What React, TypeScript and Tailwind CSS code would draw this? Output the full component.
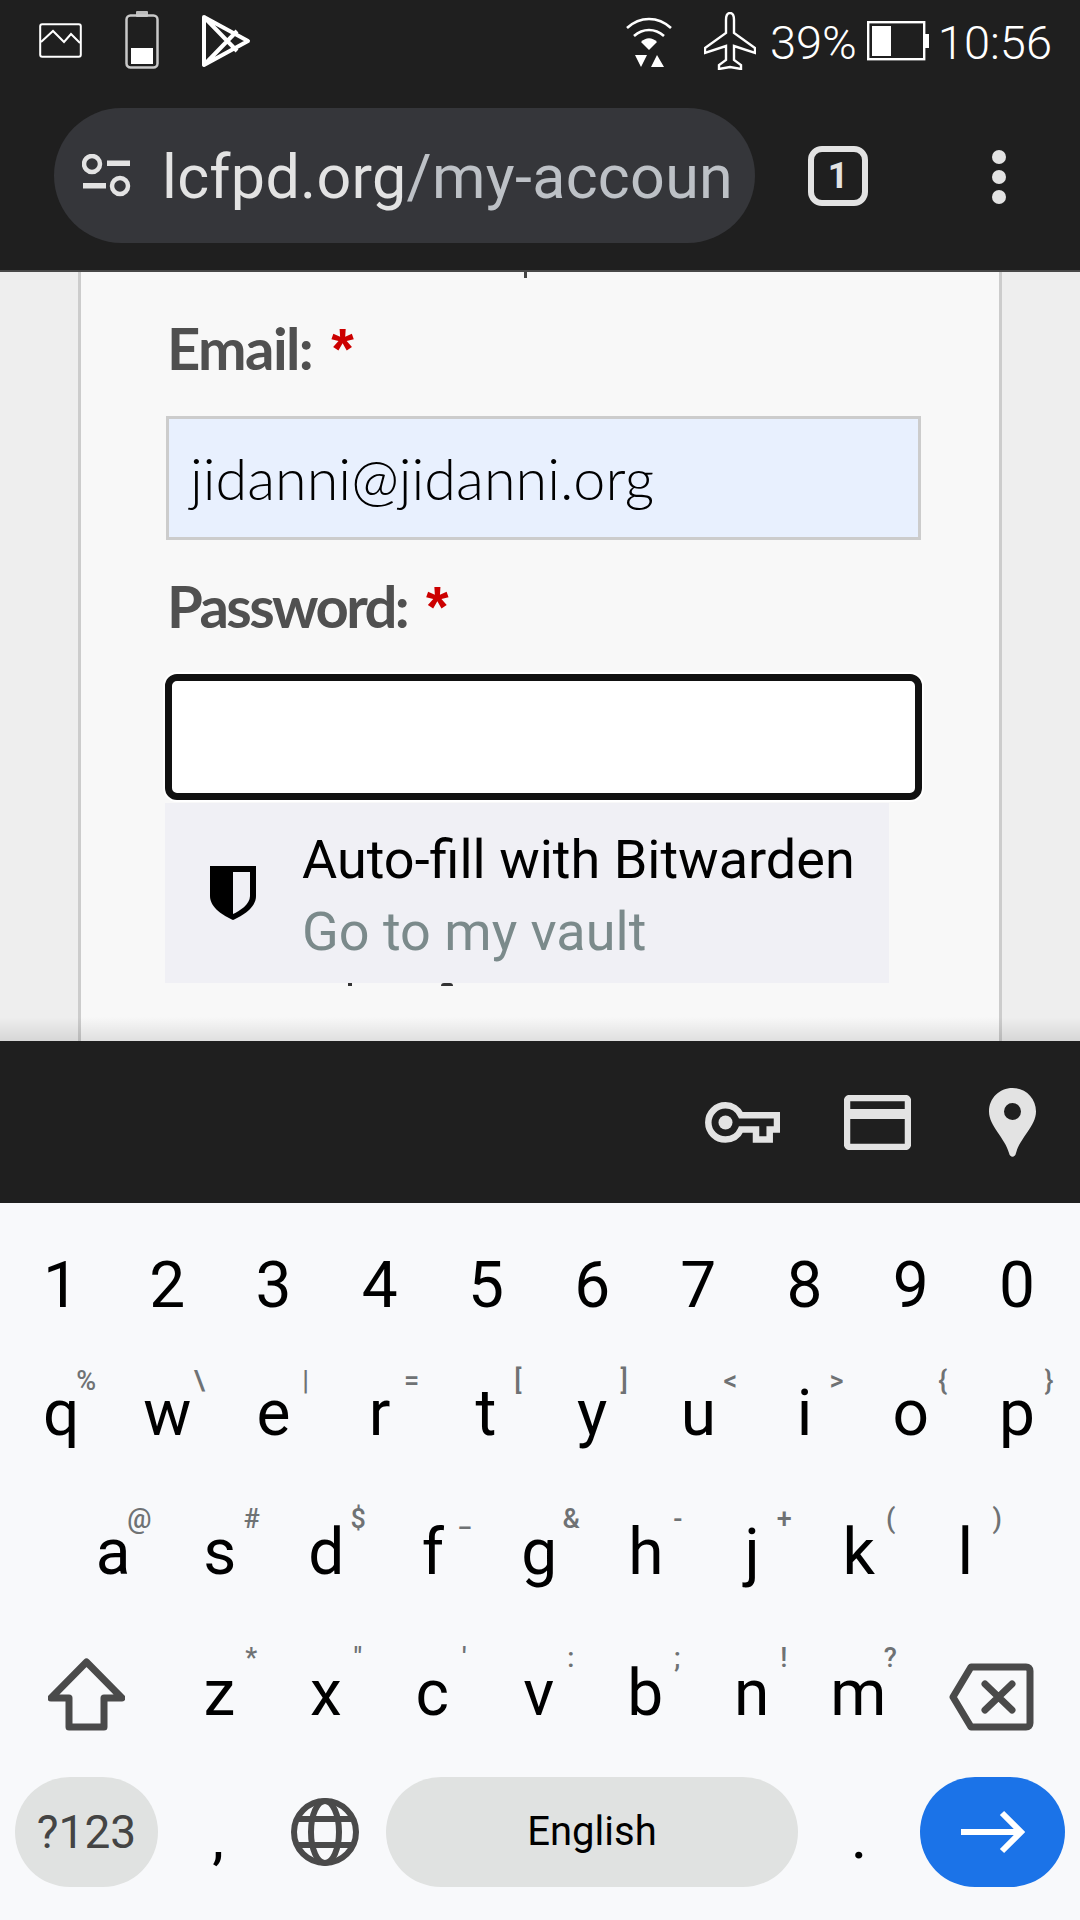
import { ReactNode } from "react";

type KeyDef = { label: string; hint: string; hintClass?: string };

const digits = ["1", "2", "3", "4", "5", "6", "7", "8", "9", "0"];

const row2: KeyDef[] = [
  { label: "q", hint: "%", hintClass: "left-[calc(50%+25px)]" },
  { label: "w", hint: "\\" },
  { label: "e", hint: "|" },
  { label: "r", hint: "=" },
  { label: "t", hint: "[" },
  { label: "y", hint: "]" },
  { label: "u", hint: "<" },
  { label: "i", hint: ">" },
  { label: "o", hint: "{" },
  { label: "p", hint: "}" },
];

const row3: KeyDef[] = [
  { label: "a", hint: "@", hintClass: "left-[calc(50%+26px)]" },
  { label: "s", hint: "#" },
  { label: "d", hint: "$" },
  { label: "f", hint: "−", hintClass: "mt-[9px]" },
  { label: "g", hint: "&" },
  { label: "h", hint: "-" },
  { label: "j", hint: "+" },
  { label: "k", hint: "(" },
  { label: "l", hint: ")" },
];

const row4: KeyDef[] = [
  { label: "z", hint: "*" },
  { label: "x", hint: '"' },
  { label: "c", hint: "'" },
  { label: "v", hint: ":" },
  { label: "b", hint: ";" },
  { label: "n", hint: "!" },
  { label: "m", hint: "?" },
];

const Key = ({ def, className, hintTop }: { def: KeyDef; className: string; hintTop: string }) => (
  <div className={`relative flex items-center justify-center text-[64px] leading-none text-black ${className}`}>
    {def.label}
    <span
      className={`absolute -translate-x-1/2 text-[27px] font-medium leading-[34px] text-[#6f7274] ${hintTop} ${
        def.hintClass?.includes("left-") ? def.hintClass : `left-[calc(50%+32px)] ${def.hintClass ?? ""}`
      }`}
    >
      {def.hint}
    </span>
  </div>
);

const Icon = ({ w, h, box, children, className }: { w: number; h: number; box: string; children: ReactNode; className?: string }) => (
  <svg width={w} height={h} viewBox={box} className={`shrink-0 ${className ?? ""}`}>
    {children}
  </svg>
);

function StatusBar() {
  return (
    <div className="flex h-[108px] items-start bg-[#1f1f1f] pr-[28px] text-white">
      <Icon w={43} h={35} box="0 0 43 35" className="ml-[39px] mt-[23px]">
        <rect x="1.2" y="1.2" width="40.6" height="32.6" rx="2" fill="none" stroke="#fff" strokeWidth="2" />
        <path d="M2 19 L14 8 L25 19 L32 11 L41 20" fill="none" stroke="#fff" strokeWidth="2" />
      </Icon>
      <Icon w={34} h={58} box="0 0 34 58" className="ml-[43px] mt-[11px]">
        <rect x="11" y="0" width="12" height="6" rx="1" fill="#bbb" />
        <rect x="1.5" y="4.5" width="31" height="52" rx="4" fill="none" stroke="#c9c9c9" strokeWidth="2.5" />
        <rect x="6" y="37" width="22" height="16" fill="#fff" />
      </Icon>
      <Icon w={50} h={54} box="0 0 50 54" className="ml-[42px] mt-[14px]">
        <path
          d="M3 3 L47 27 L3 51 Z M3 3 L36 37 M3 51 L36 17"
          fill="none"
          stroke="#fff"
          strokeWidth="4"
          strokeLinejoin="round"
        />
      </Icon>
      <div className="flex-1" />
      <Icon w={46} h={50} box="0 0 46 50" className="mt-[17px]">
        <path d="M1 11 C14 -1 32 -1 45 11 M8 19 C17 11 29 11 38 19" fill="none" stroke="#fff" strokeWidth="2.6" />
        <path d="M15 25 C20 20 26 20 31 25 L23 33 Z" fill="#fff" />
        <path d="M9 38 H21 L15 50 Z M25 50 H38 L31 38 Z" fill="#fff" />
      </Icon>
      <Icon w={52} h={58} box="0 0 52 58" className="ml-[32px] mt-[12px]">
        <path
          d="M26 1 C23 1 22 4 22 8 V21 L1 36 V41 L22 34 V48 L15 53 V57 L26 55 L37 57 V53 L30 48 V34 L51 41 V36 L30 21 V8 C30 4 29 1 26 1 Z"
          fill="none"
          stroke="#fff"
          strokeWidth="2.4"
        />
      </Icon>
      <span className="ml-[14px] mt-[15px] text-[47px] font-light leading-[56px]">39%</span>
      <Icon w={62} h={40} box="0 0 62 40" className="ml-[10px] mt-[21px]">
        <rect x="1.2" y="1.2" width="56" height="37" fill="none" stroke="#fff" strokeWidth="2.4" />
        <rect x="5" y="5" width="19" height="30" fill="#fff" />
        <rect x="58" y="13" width="4" height="14" fill="#fff" />
      </Icon>
      <span className="ml-[9px] mt-[15px] text-[47px] font-light leading-[56px]">10:56</span>
    </div>
  );
}

function Toolbar() {
  return (
    <div className="flex h-[164px] items-start border-b-2 border-[#484848] bg-[#1f1f1f]">
      <div className="ml-[54px] flex h-[135px] w-[701px] items-center overflow-hidden rounded-full bg-[#35363a] pl-[28px]">
        <Icon w={49} h={43} box="0 0 49 43">
          <circle cx="10" cy="10" r="8" fill="none" stroke="#e3e3e3" strokeWidth="4.5" />
          <rect x="25" y="6.5" width="23" height="5.5" fill="#e3e3e3" />
          <rect x="1" y="29" width="23" height="5.5" fill="#e3e3e3" />
          <circle cx="38" cy="32" r="8" fill="none" stroke="#e3e3e3" strokeWidth="4.5" />
        </Icon>
        <span className="ml-[31px] whitespace-nowrap pt-[3px] text-[61px] leading-none tracking-[0.3px]">
          <span className="text-[#e3e3e3]">lcfpd.org</span>
          <span className="text-[#bdc1c6]">/my-accoun</span>
        </span>
      </div>
      <div className="ml-[53px] mt-[38px] flex h-[60px] w-[60px] items-center justify-center rounded-[14px] border-[6px] border-[#e3e3e3] text-[36px] font-bold leading-none text-[#e3e3e3]">
        1
      </div>
      <div className="ml-[124px] mt-[42px] flex flex-col gap-[6px]">
        <div className="size-[14px] rounded-full bg-[#e3e3e3]" />
        <div className="size-[14px] rounded-full bg-[#e3e3e3]" />
        <div className="size-[14px] rounded-full bg-[#e3e3e3]" />
      </div>
    </div>
  );
}

function LoginForm() {
  return (
    <div className="relative h-[769px] overflow-hidden bg-[#eeeeee]">
      <div className="ml-[78px] h-full w-[924px] border-x-[3px] border-[#cccccc] bg-[#f8f8f8] pl-[85px]">
        {/* bit of the line above, cut off by the toolbar */}
        <div className="ml-[358px] h-[6px] w-[3px] bg-[#444]" />
        <div className="ml-[1px] mt-[35px] flex h-[70px] items-center font-['Lato',sans-serif] text-[58px] font-bold leading-[70px] tracking-[-1.6px] text-[#505050]">
          Email:
          <span className="ml-[19px] mt-[2px] font-['Liberation_Sans',sans-serif] text-[58px] text-[#cc0000]">*</span>
        </div>
        <div className="mt-[33px] flex h-[124px] w-[755px] items-center border-[3px] border-[#cccccc] bg-[#e8f0fe] pl-[21px] font-['Lato',sans-serif] text-[57.500px] font-light text-black">
          jidanni@jidanni.org
        </div>
        <div className="ml-[1px] mt-[31px] flex h-[70px] items-center font-['Lato',sans-serif] text-[58px] font-bold leading-[70px] tracking-[-2.600px] text-[#505050]">
          Password:
          <span className="ml-[19px] mt-[2px] font-['Liberation_Sans',sans-serif] text-[58px] text-[#cc0000]">*</span>
        </div>
        <div className="ml-[-1px] mt-[33px] h-[126px] w-[757px] rounded-[12px] border-[7px] border-[#111111] bg-white shadow-[0_0_0_2px_#ffffff]" />
      </div>
      {/* autofill popup sits over the page */}
      <div className="absolute left-[165px] top-[531px] flex h-[180px] w-[724px] items-center bg-[#f0f0f5]">
        <Icon w={46} h={54} box="0 0 46 54" className="ml-[45px]">
          <path d="M0 0H46V30C46 42 32 50 23 54C14 50 0 42 0 30Z" fill="#000" />
          <path d="M23 6H40V30C40 38 30 45 23 48Z" fill="#f0f0f5" />
        </Icon>
        <div className="ml-[46px] flex flex-col pt-[5px]">
          <span className="whitespace-nowrap text-[54px] leading-[72px] text-black">Auto-fill with Bitwarden</span>
          <span className="whitespace-nowrap text-[54px] leading-[72px] text-[#7b8a8b]">Go to my vault</span>
        </div>
      </div>
      {/* tops of the text hidden behind the popup */}
      <div className="absolute left-[348px] top-[711px] h-[3px] w-[4px] bg-[#333]" />
      <div className="absolute left-[441px] top-[711px] h-[3px] w-[12px] rounded-t-full bg-[#333]" />
      <div className="absolute bottom-0 left-0 right-0 h-[24px] bg-gradient-to-b from-transparent to-black/10" />
    </div>
  );
}

function Accessory() {
  return (
    <div className="flex h-[162px] items-center bg-[#1f1f1f] pl-[705px]">
      <Icon w={75} h={41} box="0 0 75 41">
        <path
          d="M36 13.300 H72 V27.500 H64.700 V37.500 H51 V27.500 H36 C33 34 27 37.500 20.500 37.500 C11 37.500 3.300 30 3.300 20.500 C3.300 11 11 3.300 20.500 3.300 C27 3.300 33 7 36 13.300 Z"
          fill="none"
          stroke="#e3e3e3"
          strokeWidth="6.500"
        />
        <circle cx="20.500" cy="20.500" r="7" fill="#e3e3e3" />
      </Icon>
      <Icon w={67} h={55} box="0 0 67 55" className="ml-[64px]">
        <rect x="3" y="3" width="61" height="49" rx="3" fill="none" stroke="#e3e3e3" strokeWidth="6.500" />
        <rect x="3" y="14" width="61" height="10" fill="#e3e3e3" />
      </Icon>
      <Icon w={47} h={69} box="0 0 47 69" className="ml-[78px]">
        <path
          fillRule="evenodd"
          d="M23.500 0 C36.500 0 47 10 47 23.500 C47 38 31 50 27 65 C26 70 21 70 20 65 C16 50 0 38 0 23.500 C0 10 10.500 0 23.500 0 Z M23.500 15 A8.500 8.500 0 1 0 23.500 32 A8.500 8.500 0 1 0 23.500 15 Z"
          fill="#e3e3e3"
        />
      </Icon>
    </div>
  );
}

function Keyboard() {
  return (
    <div className="flex h-[717px] flex-col bg-[#f8f9fb] pt-[18px] font-['Roboto',sans-serif]">
      <div className="flex h-[130px] pl-[8px] pr-[10px]">
        {digits.map((d) => (
          <div key={d} className="flex flex-1 items-center justify-center text-[64px] leading-none text-black">
            {d}
          </div>
        ))}
      </div>
      <div className="flex h-[132px] pb-[6px] pl-[8px] pr-[10px]">
        {row2.map((k) => (
          <Key key={k.label} def={k} className="flex-1" hintTop="top-[13px]" />
        ))}
      </div>
      <div className="flex h-[139px] pl-[60px]">
        {row3.map((k) => (
          <Key key={k.label} def={k} className="w-[106.500px]" hintTop="top-[19px]" />
        ))}
      </div>
      <div className="flex h-[140px] items-stretch pt-[4px]">
        <div className="flex w-[166px] items-center pl-[48px]">
          <Icon w={77} h={73} box="0 0 77 73">
            <path
              d="M38.500 4 L74 40 H56 V69 H21 V40 H3 Z"
              fill="none"
              stroke="#4a4a4a"
              strokeWidth="7"
              strokeLinejoin="round"
            />
          </Icon>
        </div>
        {row4.map((k) => (
          <Key key={k.label} def={k} className="w-[106.500px]" hintTop="top-[15px]" />
        ))}
        <div className="flex items-center pl-[37px]">
          <Icon w={85} h={68} box="0 0 85 68" className="mt-[6px]">
            <path
              d="M22 4 H77 C79.500 4 81 5.500 81 8 V60 C81 62.500 79.500 64 77 64 H22 L4 34 Z"
              fill="none"
              stroke="#4a4a4a"
              strokeWidth="7"
              strokeLinejoin="round"
            />
            <path d="M36 21 L63 47 M63 21 L36 47" fill="none" stroke="#4a4a4a" strokeWidth="7" strokeLinecap="round" />
          </Icon>
        </div>
      </div>
      <div className="mt-[15px] flex h-[110px] items-center">
        <div className="ml-[15px] flex h-full w-[143px] items-center justify-center rounded-full bg-[#e0e2e1] text-[46px] text-[#444444]">
          ?123
        </div>
        <div className="flex h-full w-[120px] items-center justify-center pt-[18px] text-[52px] font-medium leading-none text-black">
          ,
        </div>
        <Icon w={68} h={68} box="0 0 68 68" className="ml-[13px]">
          <g fill="none" stroke="#4a4a4a" strokeWidth="6">
            <circle cx="34" cy="34" r="31" />
            <ellipse cx="34" cy="34" rx="14" ry="31" />
            <path d="M5 21 H63 M5 47 H63" />
          </g>
        </Icon>
        <div className="ml-[27px] flex h-full w-[412px] items-center justify-center rounded-full bg-[#e0e2e1] text-[40px] text-black">
          English
        </div>
        <div className="flex h-full w-[122px] items-center justify-center pt-[18px] text-[52px] font-medium leading-none text-black">
          .
        </div>
        <div className="flex h-full w-[145px] items-center justify-center rounded-full bg-[#1b73e8]">
          <Icon w={64} h={44} box="0 0 64 44">
            <path d="M0 22 H60 M41 3 L60 22 L41 41" fill="none" stroke="#ffffff" strokeWidth="6" />
          </Icon>
        </div>
      </div>
    </div>
  );
}

export default function App() {
  return (
    <div className="flex h-[1920px] w-[1080px] flex-col overflow-hidden font-['Roboto',sans-serif]">
      <StatusBar />
      <Toolbar />
      <LoginForm />
      <Accessory />
      <Keyboard />
    </div>
  );
}
